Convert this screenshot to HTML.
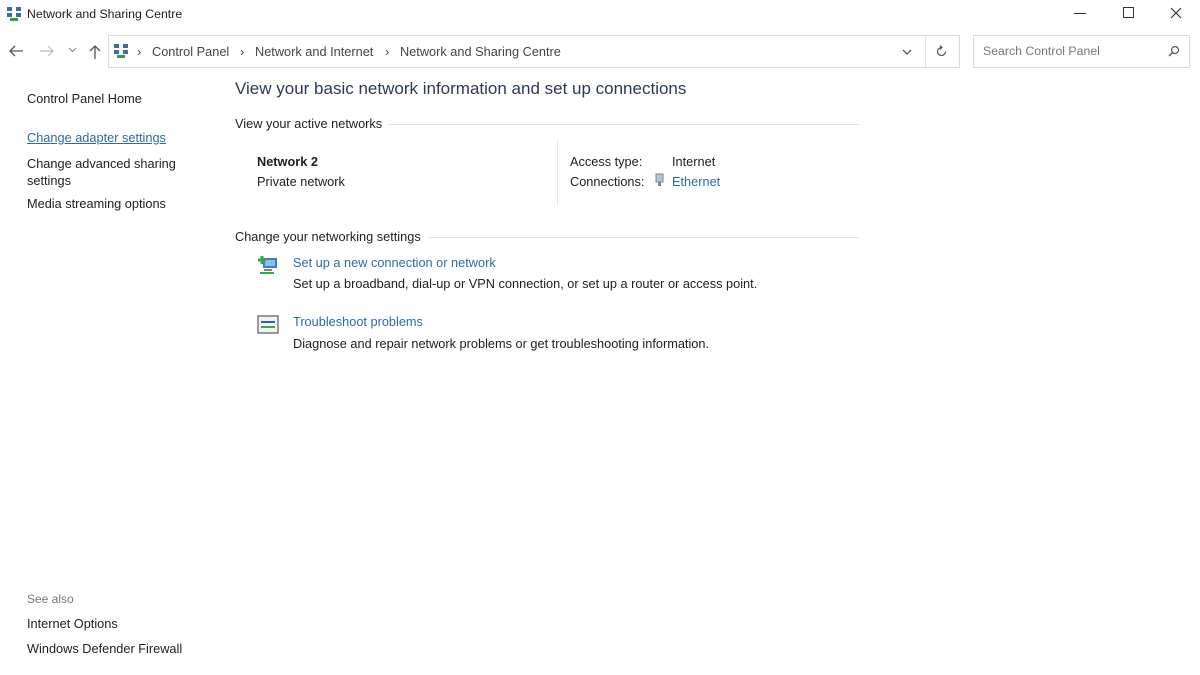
<!DOCTYPE html>
<html><head><meta charset="utf-8">
<style>
*{margin:0;padding:0;box-sizing:border-box}
body{width:1200px;height:675px;background:#fff;font-family:"Liberation Sans",sans-serif;font-size:12.75px;color:#1e1e1e;position:relative;overflow:hidden}
.a{position:absolute;white-space:nowrap}
.link{color:#2f6aa3}
.hr{position:absolute;height:1px;background:#e2e2e2}
</style></head><body>
<svg class="a" style="left:6px;top:6px" width="16" height="16" viewBox="0 0 16 16"><rect x="1" y="1" width="5" height="4" fill="#3a6ea5"/><rect x="10" y="1" width="5" height="4" fill="#3a6ea5"/><rect x="1" y="7" width="5" height="4" fill="#3a6ea5"/><rect x="10" y="7" width="5" height="4" fill="#3a6ea5"/><rect x="4" y="12" width="8" height="3" fill="#3a9a4a"/></svg>
<div class="a" style="left:27px;top:7px;font-size:12.3px">Network and Sharing Centre</div>
<div class="a" style="left:1074px;top:13px;width:12px;height:1px;background:#333"></div>
<div class="a" style="left:1123px;top:7px;width:11px;height:11px;border:1px solid #333"></div>
<svg class="a" style="left:1170px;top:7px" width="12" height="12"><path d="M1 1L11 11M11 1L1 11" stroke="#333" stroke-width="1.2"/></svg>

<svg class="a" style="left:8px;top:44px" width="16" height="14"><path d="M15 7H2M7 2L2 7L7 12" stroke="#555" stroke-width="1.3" fill="none"/></svg>
<svg class="a" style="left:39px;top:44px" width="16" height="14"><path d="M1 7H14M9 2L14 7L9 12" stroke="#bbb" stroke-width="1.2" fill="none"/></svg>
<svg class="a" style="left:68px;top:47px" width="9" height="6"><path d="M1 1L4.5 4.5L8 1" stroke="#888" stroke-width="1.1" fill="none"/></svg>
<svg class="a" style="left:88px;top:44px" width="14" height="16"><path d="M7 15V2M2 7L7 2L12 7" stroke="#555" stroke-width="1.3" fill="none"/></svg>

<div class="a" style="left:108px;top:35px;width:852px;height:33px;border:1px solid #d9d9d9"></div>
<div class="a" style="left:925px;top:36px;width:1px;height:31px;background:#e2e2e2"></div>
<svg class="a" style="left:113px;top:43px" width="16" height="16" viewBox="0 0 16 16"><rect x="1" y="1" width="5" height="4" fill="#3a6ea5"/><rect x="10" y="1" width="5" height="4" fill="#3a6ea5"/><rect x="1" y="7" width="5" height="4" fill="#3a6ea5"/><rect x="10" y="7" width="5" height="4" fill="#3a6ea5"/><rect x="4" y="12" width="8" height="3" fill="#3a9a4a"/></svg>
<div class="a" style="left:137px;top:44px;color:#444">›</div>
<div class="a" style="left:152px;top:44px;color:#444">Control Panel</div>
<div class="a" style="left:240px;top:44px;color:#444">›</div>
<div class="a" style="left:255px;top:44px;color:#444">Network and Internet</div>
<div class="a" style="left:385px;top:44px;color:#444">›</div>
<div class="a" style="left:400px;top:44px;color:#444">Network and Sharing Centre</div>
<svg class="a" style="left:902px;top:49px" width="10" height="6"><path d="M1 1L5 5L9 1" stroke="#555" stroke-width="1.3" fill="none"/></svg>
<svg class="a" style="left:935px;top:45px" width="13" height="13" viewBox="0 0 13 13"><path d="M10.5 6.5A4 4 0 1 1 6.5 2.5" stroke="#555" stroke-width="1.2" fill="none"/><path d="M5 0.5L7 2.5L5 4.5" stroke="#555" stroke-width="1.2" fill="none"/></svg>

<div class="a" style="left:973px;top:35px;width:217px;height:33px;border:1px solid #d9d9d9"></div>
<div class="a" style="left:983px;top:44px;color:#777;font-size:12.3px">Search Control Panel</div>
<svg class="a" style="left:1168px;top:45px" width="12" height="12"><circle cx="7" cy="5" r="3.5" stroke="#555" stroke-width="1.2" fill="none"/><path d="M4.5 7.5L1 11" stroke="#555" stroke-width="1.4"/></svg>

<div class="a" style="left:27px;top:91px">Control Panel Home</div>
<div class="a link" style="left:27px;top:130px;text-decoration:underline">Change adapter settings</div>
<div class="a" style="left:27px;top:155px;line-height:17px">Change advanced sharing<br>settings</div>
<div class="a" style="left:27px;top:196px">Media streaming options</div>
<div class="a" style="left:27px;top:592px;color:#777;font-size:12px">See also</div>
<div class="a" style="left:27px;top:616px">Internet Options</div>
<div class="a" style="left:27px;top:641px">Windows Defender Firewall</div>

<div class="a" style="left:235px;top:79px;font-size:17px;color:#2a3a55">View your basic network information and set up connections</div>
<div class="a" style="left:235px;top:116px">View your active networks</div>
<div class="hr" style="left:387px;top:124px;width:472px"></div>
<div class="a" style="left:257px;top:154px;font-weight:bold">Network 2</div>
<div class="a" style="left:257px;top:174px">Private network</div>
<div class="a" style="left:557px;top:140px;width:1px;height:66px;background:#e8e8e8"></div>
<div class="a" style="left:570px;top:154px">Access type:</div>
<div class="a" style="left:672px;top:154px">Internet</div>
<div class="a" style="left:570px;top:174px">Connections:</div>
<svg class="a" style="left:655px;top:173px" width="9" height="14"><rect x="1" y="1" width="7" height="8" fill="#b8c4d0" stroke="#7a8a99"/><rect x="3" y="9" width="3" height="4" fill="#7a8a99"/></svg>
<div class="a link" style="left:672px;top:174px">Ethernet</div>

<div class="a" style="left:235px;top:229px">Change your networking settings</div>
<div class="hr" style="left:428px;top:237px;width:431px"></div>
<svg class="a" style="left:256px;top:253px" width="24" height="24" viewBox="0 0 24 24"><rect x="7" y="5" width="14" height="10" fill="#3d7fc4"/><rect x="9" y="7" width="10" height="6" fill="#8cc0ea"/><path d="M2 7h8M6 3v8" stroke="#3aa64a" stroke-width="3"/><path d="M4 20h14" stroke="#3aa64a" stroke-width="2"/><path d="M8 17h8" stroke="#555" stroke-width="1.5"/></svg>
<div class="a link" style="left:293px;top:255px">Set up a new connection or network</div>
<div class="a" style="left:293px;top:276px">Set up a broadband, dial-up or VPN connection, or set up a router or access point.</div>
<svg class="a" style="left:257px;top:315px" width="22" height="20" viewBox="0 0 22 20"><rect x="1" y="1" width="20" height="17" fill="#f2f2f2" stroke="#666" stroke-width="1.3"/><path d="M4 7h14" stroke="#2a5fa0" stroke-width="2"/><path d="M4 12h14" stroke="#3aa64a" stroke-width="2"/></svg>
<div class="a link" style="left:293px;top:314px">Troubleshoot problems</div>
<div class="a" style="left:293px;top:336px">Diagnose and repair network problems or get troubleshooting information.</div>
</body></html>
